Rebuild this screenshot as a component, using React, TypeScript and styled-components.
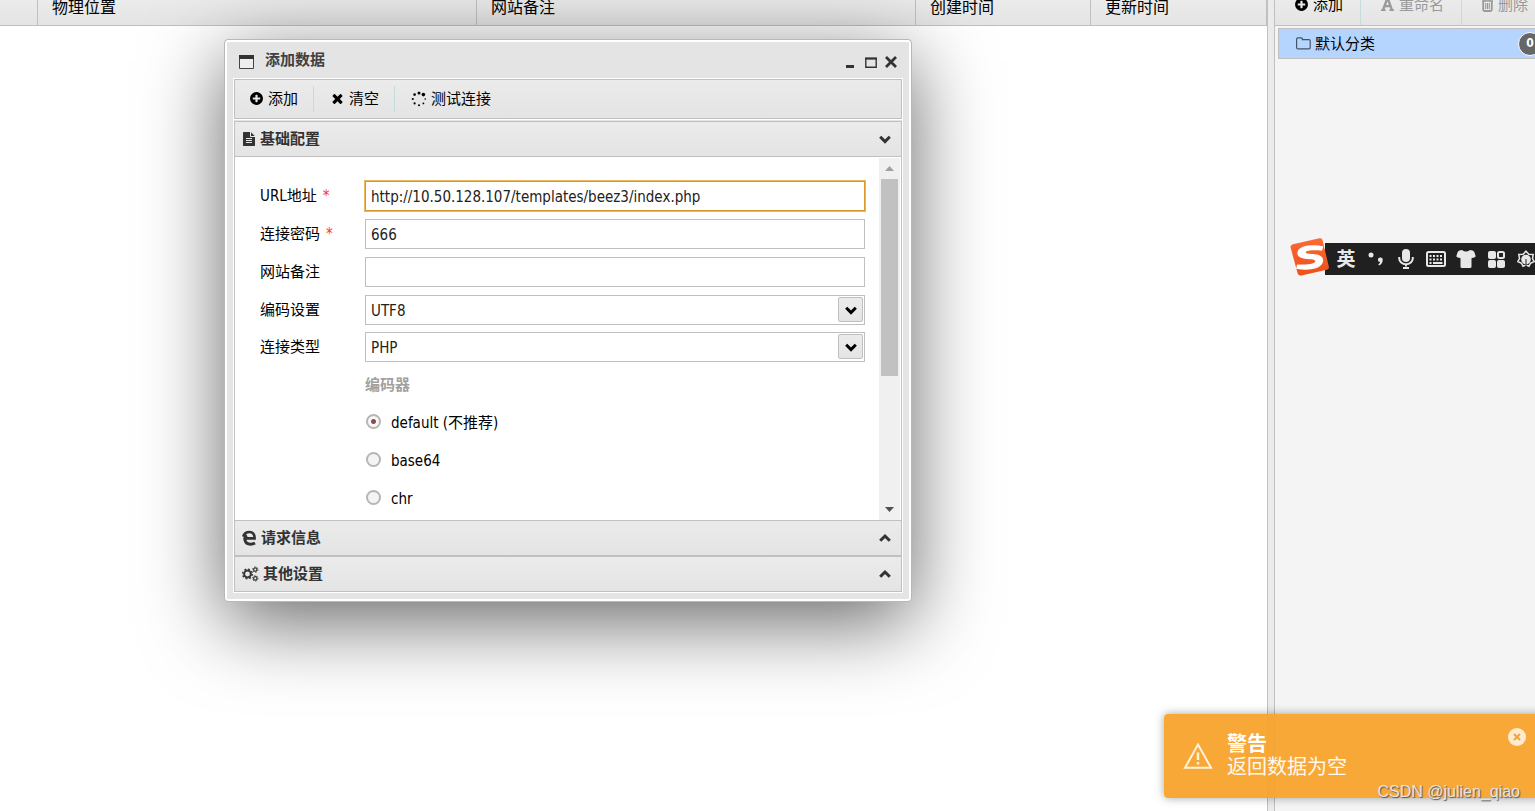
import React, { useState } from "react";
import styled, { createGlobalStyle, css } from "styled-components";
import { FaFont } from "react-icons/fa";

const edge = "#c0c0c0";
const bar = "linear-gradient(#ebebeb, #e4e4e4)";

const GlobalStyle = createGlobalStyle`
  * { box-sizing: border-box; }
  html, body, #root { height: 100%; margin: 0; }
  body {
    overflow: hidden;
    background: #fff;
    color: #000;
    font: 15px/20px Tahoma, "DejaVu Sans Condensed", "Noto Sans CJK SC", sans-serif;
  }
  button, input, select { font: inherit; color: inherit; margin: 0; }
  button { border: 0; padding: 0; background: none; white-space: nowrap; cursor: pointer; }
  svg { display: block; flex: none; }
`;

/* ---------- icons ---------- */

const Glyph = ({ d, size }: { d: string; size: number }) => (
  <svg width={size} height={size} viewBox="0 0 1792 1792" fill="currentColor" aria-hidden="true">
    <path d={d} />
  </svg>
);

const plusCircle =
  "M1344 960v-128q0-26-19-45t-45-19h-256v-256q0-26-19-45t-45-19h-128q-26 0-45 19t-19 45v256h-256q-26 0-45 19t-19 45v128q0 26 19 45t45 19h256v256q0 26 19 45t45 19h128q26 0 45-19t19-45v-256h256q26 0 45-19t19-45zm320-64q0 209-103 385.5t-279.5 279.5-385.5 103-385.5-103-279.5-279.5-103-385.5 103-385.5 279.5-279.5 385.5-103 385.5 103 279.5 279.5 103 385.5z";
const times =
  "M1490 1322q0 40-28 68l-136 136q-28 28-68 28t-68-28l-294-294-294 294q-28 28-68 28t-68-28l-136-136q-28-28-28-68t28-68l294-294-294-294q-28-28-28-68t28-68l136-136q28-28 68-28t68 28l294 294 294-294q28-28 68-28t68 28l136 136q28 28 28 68t-28 68l-294 294 294 294q28 28 28 68z";
const fileText =
  "M1596 476q14 14 28 36h-472v-472q22 14 36 28zm-476 164h544v1056q0 40-28 68t-68 28h-1344q-40 0-68-28t-28-68v-1600q0-40 28-68t68-28h800v544q0 40 28 68t68 28zm160 736v-64q0-14-9-23t-23-9h-704q-14 0-23 9t-9 23v64q0 14 9 23t23 9h704q14 0 23-9t9-23zm0-256v-64q0-14-9-23t-23-9h-704q-14 0-23 9t-9 23v64q0 14 9 23t23 9h704q14 0 23-9t9-23zm0-256v-64q0-14-9-23t-23-9h-704q-14 0-23 9t-9 23v64q0 14 9 23t23 9h704q14 0 23-9t9-23z";

const Chevron = ({ up }: { up?: boolean }) => (
  <svg width="14" height="14" viewBox="0 0 14 14" fill="none" stroke="currentColor" strokeWidth="3" aria-hidden="true">
    <path d={up ? "M2.2 9.8 7 5l4.8 4.8" : "M2.2 4.8 7 9.6l4.8-4.8"} />
  </svg>
);

const Spinner = () => (
  <svg width="16" height="16" viewBox="0 0 16 16" fill="currentColor" aria-hidden="true">
    <circle cx="8" cy="2" r="1.5" />
    <circle cx="12.4" cy="3.6" r="1.8" />
    <circle cx="14.2" cy="8" r="0.8" />
    <circle cx="12.4" cy="12.4" r="0.9" />
    <circle cx="8" cy="14.2" r="1" />
    <circle cx="3.6" cy="12.4" r="1.1" />
    <circle cx="1.8" cy="8" r="1.1" />
    <circle cx="3.6" cy="3.6" r="1.3" />
  </svg>
);

const BrowserIcon = () => (
  <svg width="15" height="16" viewBox="0 0 15 16" fill="none" stroke="currentColor" aria-hidden="true">
    <path d="M3.6 8.4H12.6C12.8 4.2 10.6 2 7.6 2 4.6 2 2 3.8 1.2 6.6" strokeWidth="2.6" />
    <path d="M4.8 5.2C1.6 7.2 2.2 14.2 8.4 14.2c2 0 3.4-.5 4.6-1.2" strokeWidth="3" />
  </svg>
);

const GearsIcon = () => (
  <svg width="17" height="16" viewBox="0 0 17 16" fill="none" stroke="currentColor" aria-hidden="true">
    <circle cx="5.5" cy="8" r="3.4" strokeWidth="2" />
    <circle cx="5.5" cy="8" r="4.9" strokeWidth="1.4" strokeDasharray="1.9 1.95" />
    <circle cx="13.3" cy="3.6" r="1.7" strokeWidth="1.2" />
    <circle cx="13.3" cy="3.6" r="2.7" strokeWidth="1" strokeDasharray="1.2 1.62" />
    <circle cx="13.3" cy="12.4" r="1.7" strokeWidth="1.2" />
    <circle cx="13.3" cy="12.4" r="2.7" strokeWidth="1" strokeDasharray="1.2 1.62" />
  </svg>
);

const TrashIcon = () => (
  <svg width="13" height="14" viewBox="0 0 13 14" fill="none" stroke="currentColor" aria-hidden="true">
    <path d="M1 3h11M4.200 3V1h4.600v2" strokeWidth="1.500" />
    <path d="M2.200 3v8.500q0 1.500 1.300 1.500h6q1.300 0 1.300-1.500V3" strokeWidth="1.800" />
    <path d="M4.700 5v6M6.500 5v6M8.300 5v6" strokeWidth="1.100" />
  </svg>
);

const WindowIcon = () => (
  <svg width="16" height="16" viewBox="0 0 16 16" aria-hidden="true">
    <path d="M.5 1.5h14v13H.5z" fill="#ededed" stroke="#444" />
    <path d="M0 1h15v4H0z" fill="#333" />
  </svg>
);

const FolderIcon = () => (
  <svg width="15" height="13" viewBox="0 0 15 13" fill="none" stroke="#456" aria-hidden="true">
    <path d="M.6 10.4V2.2Q.6.8 2 .8h3.2q1.2 0 1.2 1.4v.4H13q1.2 0 1.2 1.3v6.5q0 1.5-1.3 1.5H2q-1.4 0-1.4-1.5z" strokeWidth="1.2" />
  </svg>
);

const SogouLogo = () => (
  <svg width="40" height="40" viewBox="0 0 40 40" aria-hidden="true">
    <defs>
      <linearGradient id="sogou" x1="0" y1="0" x2="0" y2="1">
        <stop offset="0" stopColor="#fb6a35" />
        <stop offset="1" stopColor="#ee4f18" />
      </linearGradient>
    </defs>
    <path d="M3 7.2 29.5 1.3q2.4-.5 3 1.8l6.3 26.5q.5 2.6-2 3.2L11.4 38.5q-3 .6-3.7-2L.6 10.6Q0 7.9 3 7.2z" fill="url(#sogou)" />
    <path d="M33.5 9.3C27 7.6 12 7 8.200 13.3c-2.7 5.2 1.5 8 8 8.6 5 .5 9.6.4 9 2.5-.8 2.6-9.6 3.5-18.2 3.1l-.8 4.3c9.8 1.7 22.5 1.4 26.100-5.2 2.5-5-.7-8.700-7.4-9.300-4.7-.5-9.700-.3-9.200-2.200.6-2 9.500-2.300 16.200-1.400z" fill="#fff" />
  </svg>
);

const MicIcon = () => (
  <svg width="16" height="20" viewBox="0 0 16 20" fill="none" stroke="currentColor" strokeWidth="2" aria-hidden="true">
    <rect x="4" y="0" width="8" height="13" rx="4" fill="currentColor" stroke="none" />
    <path d="M1.200 8v1.200a6.800 6 0 0 0 13.600 0V8M8 15v2.500" />
    <path d="M5 19h6" />
  </svg>
);

const KeyboardIcon = () => (
  <svg width="20" height="16" viewBox="0 0 20 16" fill="none" stroke="currentColor" strokeWidth="2" aria-hidden="true">
    <rect x="1" y="1" width="18" height="14" rx="1.5" />
    <path d="M3.500 5h2m1.500 0h2m1.500 0h2m1.500 0h2M3.500 8.500h2m1.500 0h2m1.500 0h2m1.500 0h2M3.500 12h2m1.500 0h9.500" />
  </svg>
);

const ShirtIcon = () => (
  <svg width="20" height="18" viewBox="0 0 20 18" fill="currentColor" aria-hidden="true">
    <path d="M6 0q4 3.200 8 0l2.500.6Q18 1 18.500 2.500L19.600 6q.2 1-.8 1.300l-3.300.9v8.300q0 1.500-1.500 1.500H6q-1.500 0-1.500-1.500V8.200l-3.300-.9Q.2 7 .4 6l1.100-3.500Q2 1 3.500.6z" />
  </svg>
);

const GridIcon = () => (
  <svg width="17" height="17" viewBox="0 0 17 17" fill="currentColor" aria-hidden="true">
    <rect width="8" height="8" rx="2" />
    <rect x="10" y="1" width="6" height="6" rx="1.5" fill="none" stroke="currentColor" strokeWidth="2" />
    <rect y="9" width="8" height="8" rx="2" />
    <rect x="9" y="9" width="8" height="8" rx="2" />
  </svg>
);

const FlowerIcon = () => (
  <svg width="18" height="19" viewBox="0 0 18 19" fill="none" stroke="currentColor" aria-hidden="true">
    <path d="M9 1.200 11.800 4.300l4.400.2-.7 4 1.700 3-3.700 1.700-1.500 3-3-1.200-3 1.200-1.500-3L.8 11.500l1.700-3-.7-4 4.400-.2z" strokeWidth="1.500" />
    <circle cx="9" cy="9.500" r="4.800" fill="currentColor" stroke="none" />
    <path d="M9 9v9" stroke="#202020" />
  </svg>
);

const WarningIcon = () => (
  <svg width="30" height="28" viewBox="0 0 30 28" fill="none" stroke="#fff2da" strokeWidth="2" aria-hidden="true">
    <path d="M15 2.500 28 25.800H2z" />
    <path d="M15 10.500v7.500M15 20v2.500" strokeWidth="2.500" />
  </svg>
);

/* ---------- page ---------- */

const Page = styled.div`
  position: relative;
  display: grid;
  grid-template-columns: minmax(0, 1fr) 261px;
  column-gap: 6px;
  height: 100vh;
  overflow: hidden;
  background: #ebebeb;
`;

const Main = styled.main`
  background: #fff;
  border-right: 1px solid ${edge};
`;

const ListTable = styled.table`
  width: 100%;
  table-layout: fixed;
  border-collapse: separate;
  border-spacing: 0;
`;

const HeadCell = styled.th<{ $w?: number }>`
  width: ${(p) => (p.$w ? `${p.$w}px` : "auto")};
  height: 26px;
  padding: 0 0 10px 14px;
  vertical-align: bottom;
  text-align: left;
  font-weight: 400;
  font-size: 16px;
  line-height: 15px;
  background: ${bar};
  border-right: 1px solid ${edge};
  border-bottom: 1px solid ${edge};
`;

const Side = styled.aside`
  min-width: 0;
  overflow: hidden;
  background: #f4f4f4;
  border-left: 1px solid ${edge};
`;

const SideBar = styled.div`
  display: flex;
  align-items: flex-end;
  height: 26px;
  background: ${bar};
  border-bottom: 1px solid ${edge};
`;

const SideTool = styled.button`
  display: flex;
  align-items: center;
  gap: 4px;
  height: 26px;
  padding: 0 17px 15px 19px;
  border-right: 1px solid #c5dcdc;
  line-height: 20px;
  &:disabled { color: #999; }
`;

const Category = styled.div`
  display: flex;
  align-items: center;
  gap: 4px;
  height: 31px;
  margin: 2px -25px 0 3px;
  padding: 0 17px;
  background: #b5d5ff;
  border: 1px solid ${edge};
`;

const Badge = styled.span`
  margin-left: auto;
  width: 24px;
  height: 24px;
  border: 1px solid #fff;
  border-radius: 12px;
  background: #666;
  color: #fff;
  font-size: 12px;
  font-weight: 700;
  line-height: 21px;
  text-align: center;
`;

/* ---------- dialog window ---------- */

const Dialog = styled.section`
  position: absolute;
  left: 224px;
  top: 39px;
  width: 688px;
  padding: 0 6px 8px;
  border: 1px solid #b8b8b8;
  border-radius: 4px;
  background: #e4e4e4;
  box-shadow: inset 0 0 0 2px #fff, 0 20px 80px rgba(0, 0, 0, 0.6);
`;

const TitleBar = styled.header`
  display: flex;
  align-items: center;
  gap: 10px;
  height: 36px;
  padding: 4px 10px 0 8px;
  margin-top: 2px;
  color: #404040;
  font-weight: 700;
`;

const Title = styled.h1`
  flex: 1;
  margin: 0 0 4px;
  font-size: 15px;
  line-height: 20px;
`;

const WindowButton = styled.button`
  display: grid;
  place-items: center;
  width: 10px;
  height: 14px;
  color: #333;
`;

const Frame = styled.div`
  border: 1px solid #fff;
  margin: 0 2px;
`;

const Toolbar = styled.div`
  display: flex;
  align-items: center;
  height: 40px;
  margin-bottom: 2px;
  border: 1px solid ${edge};
  background: ${bar};
  outline: 1px solid #fff;
`;

const Tool = styled.button`
  display: flex;
  align-items: center;
  gap: 4px;
  height: 26px;
  padding: 0 15px 1px 14px;
  & + & { padding-left: 16px; border-left: 1px solid #c5dcdc; }
`;

const SectionHead = styled.button`
  display: flex;
  align-items: center;
  gap: 4px;
  width: 100%;
  height: 36px;
  padding: 0 9px 0 7px;
  border: 1px solid ${edge};
  background: ${bar};
  color: #333;
  font-weight: 700;
`;

const HeadText = styled.span`
  flex: 1;
  text-align: left;
`;

const Pane = styled.div`
  display: flex;
  height: 363px;
  overflow: hidden;
  padding: 1px 1px 0 0;
  border: solid ${edge};
  border-width: 0 1px;
  background: #fff;
`;

const Form = styled.form`
  flex: 1;
  min-width: 0;
  padding: 23px 14px 0 25px;
`;

const Group = styled.div<{ $gap: number }>`
  display: flex;
  flex-direction: column;
  gap: ${(p) => p.$gap}px;
  margin-bottom: 8px;
`;

const Row = styled.div`
  display: flex;
  align-items: center;
  height: 30px;
`;

const Label = styled.label`
  width: 105px;
  padding-bottom: 1px;
`;

const Required = styled.span`
  margin-left: 6px;
  color: #f33;
`;

const fieldBox = css`
  flex: 1;
  min-width: 0;
  width: 100%;
  height: 30px;
  padding: 2px 5px 0;
  border: 1px solid ${edge};
  border-radius: 0;
  background: #fff;
  color: #222;
  outline: 0;
`;

const Input = styled.input<{ $active?: boolean }>`
  ${fieldBox}
  ${(p) => p.$active && css`
    border-color: #d99a2b;
    box-shadow: 0 0 0 1px #eab75a;
  `}
`;

const SelectWrap = styled.div`
  position: relative;
  flex: 1;
`;

const Select = styled.select`
  ${fieldBox}
  display: block;
  appearance: none;
`;

const SelectArrow = styled.span`
  position: absolute;
  top: 2px;
  right: 2px;
  display: grid;
  place-items: center;
  width: 25px;
  height: 25px;
  border: 1px solid ${edge};
  border-radius: 2px;
  background: ${bar};
  color: #000;
  pointer-events: none;
`;

const Encoders = styled.fieldset`
  margin: 0 0 0 105px;
  padding: 0;
  border: 0;
`;

const Legend = styled.legend`
  height: 30px;
  padding: 0;
  color: #a0a0a0;
  font-weight: 700;
  line-height: 30px;
`;

const Choice = styled.label`
  display: flex;
  align-items: center;
  gap: 10px;
  height: 30px;
  margin-top: 8px;
  padding-left: 1px;
`;

const Radio = styled.input`
  appearance: none;
  width: 15px;
  height: 15px;
  margin-bottom: 3px;
  border: 2px solid #b9b4b7;
  border-radius: 50%;
  background: #f4f4f4;
  &:checked {
    background: radial-gradient(circle, #8f4a4a 2px, #f8f8f8 3px);
  }
`;

const ScrollTrack = styled.div`
  display: flex;
  flex-direction: column;
  justify-content: space-between;
  width: 21px;
  padding: 0 2px;
  background: #f0f0f0;
`;

const ScrollThumb = styled.div`
  flex: none;
  height: 197px;
  margin-bottom: auto;
  background: #c1c1c1;
`;

const ScrollArrow = styled.button<{ $down?: boolean }>`
  display: grid;
  place-items: center;
  height: 21px;
  color: ${(p) => (p.$down ? "#505050" : "#a0a0a0")};
`;

/* ---------- overlays ---------- */

const ImeBar = styled.div`
  position: absolute;
  right: 0;
  top: 243px;
  display: flex;
  align-items: center;
  width: 210px;
  height: 32px;
  background: #202020;
  color: #e8e8e8;
  white-space: nowrap;
`;

const ImeLogo = styled.span`
  margin-left: -35px;
  margin-right: 1px;
  margin-top: -4px;
`;

const ImeItem = styled.button`
  flex: none;
  display: grid;
  place-items: center;
  width: 30px;
  height: 32px;
  font-size: 19px;
  font-weight: 700;
`;

const Toast = styled.div`
  position: absolute;
  right: -10px;
  bottom: 13px;
  display: flex;
  align-items: center;
  gap: 14px;
  width: 381px;
  height: 84px;
  padding: 0 19px;
  border-radius: 4px;
  background: rgba(248, 161, 40, 0.93);
  box-shadow: 0 0 10px rgba(0, 0, 0, 0.35);
  color: #fff8ec;
  font: 20px/23px "Liberation Serif", "Noto Sans CJK SC", serif;
`;

const ToastText = styled.p`
  flex: 1;
  margin: 0;
  strong { display: block; color: #fff; }
`;

const ToastClose = styled.button`
  align-self: flex-start;
  display: grid;
  place-items: center;
  width: 18px;
  height: 18px;
  margin-top: 14px;
  border-radius: 50%;
  background: #fdebd0;
  color: #f0a43c;
`;

const Watermark = styled.span`
  position: absolute;
  right: 15px;
  bottom: 9px;
  color: #e4e4e4;
  font: 16px/20px "Liberation Sans", sans-serif;
  text-shadow: 1px 1px 1px #555;
`;

export default function App() {
  const [encoder, setEncoder] = useState("default");
  return (
    <>
      <GlobalStyle />
      <Page>
        <Main>
          <ListTable>
            <thead>
              <tr>
                <HeadCell $w={38} />
                <HeadCell>物理位置</HeadCell>
                <HeadCell>网站备注</HeadCell>
                <HeadCell $w={175}>创建时间</HeadCell>
                <HeadCell $w={176}>更新时间</HeadCell>
              </tr>
            </thead>
          </ListTable>
        </Main>

        <Side>
          <SideBar>
            <SideTool><Glyph d={plusCircle} size={15} />添加</SideTool>
            <SideTool disabled><FaFont size={15} />重命名</SideTool>
            <SideTool disabled><TrashIcon />删除</SideTool>
          </SideBar>
          <Category>
            <FolderIcon />
            默认分类
            <Badge>0</Badge>
          </Category>
        </Side>

        <Dialog role="dialog" aria-labelledby="dialog-title">
          <TitleBar>
            <WindowIcon />
            <Title id="dialog-title">添加数据</Title>
            <WindowButton aria-label="最小化">
              <svg width="10" height="12" viewBox="0 0 10 12"><path d="M1 9h8v3H1z" fill="#333" /></svg>
            </WindowButton>
            <WindowButton aria-label="最大化">
              <svg width="12" height="11" viewBox="0 0 12 11"><path d="M.8 1.500h10.400v8.700H.8z" fill="none" stroke="#333" strokeWidth="1.400" /><path d="M0 .5h12v2H0z" fill="#333" /></svg>
            </WindowButton>
            <WindowButton aria-label="关闭">
              <svg width="12" height="12" viewBox="0 0 12 12" stroke="#333" strokeWidth="2.800"><path d="m1 1 10 10M11 1 1 11" /></svg>
            </WindowButton>
          </TitleBar>
          <Frame>
            <Toolbar>
              <Tool><Glyph d={plusCircle} size={15} />添加</Tool>
              <Tool><Glyph d={times} size={15} />清空</Tool>
              <Tool><Spinner />测试连接</Tool>
            </Toolbar>

            <SectionHead aria-expanded="true">
              <Glyph d={fileText} size={14} />
              <HeadText>基础配置</HeadText>
              <Chevron />
            </SectionHead>
            <Pane>
              <Form>
                <Group $gap={8}>
                  <Row>
                    <Label htmlFor="url">URL地址<Required>*</Required></Label>
                    <Input id="url" $active defaultValue="http://10.50.128.107/templates/beez3/index.php" />
                  </Row>
                  <Row>
                    <Label htmlFor="pwd">连接密码<Required>*</Required></Label>
                    <Input id="pwd" defaultValue="666" />
                  </Row>
                  <Row>
                    <Label htmlFor="note">网站备注</Label>
                    <Input id="note" />
                  </Row>
                </Group>
                <Group $gap={7}>
                  <Row>
                    <Label htmlFor="encode">编码设置</Label>
                    <SelectWrap>
                      <Select id="encode"><option>UTF8</option></Select>
                      <SelectArrow><Chevron /></SelectArrow>
                    </SelectWrap>
                  </Row>
                  <Row>
                    <Label htmlFor="type">连接类型</Label>
                    <SelectWrap>
                      <Select id="type"><option>PHP</option></Select>
                      <SelectArrow><Chevron /></SelectArrow>
                    </SelectWrap>
                  </Row>
                </Group>
                <Encoders>
                  <Legend>编码器</Legend>
                  {[["default", "default (不推荐)"], ["base64", "base64"], ["chr", "chr"]].map(([value, text]) => (
                    <Choice key={value}>
                      <Radio type="radio" name="encoder" checked={encoder === value} onChange={() => setEncoder(value)} />
                      {text}
                    </Choice>
                  ))}
                </Encoders>
              </Form>
              <ScrollTrack>
                <ScrollArrow aria-label="向上滚动">
                  <svg width="9" height="5" viewBox="0 0 9 5" fill="currentColor"><path d="M4.500 0 9 5H0z" /></svg>
                </ScrollArrow>
                <ScrollThumb />
                <ScrollArrow $down aria-label="向下滚动">
                  <svg width="9" height="5" viewBox="0 0 9 5" fill="currentColor"><path d="M0 0h9L4.500 5z" /></svg>
                </ScrollArrow>
              </ScrollTrack>
            </Pane>
            <SectionHead aria-expanded="false">
              <BrowserIcon />
              <HeadText>请求信息</HeadText>
              <Chevron up />
            </SectionHead>
            <SectionHead aria-expanded="false">
              <GearsIcon />
              <HeadText>其他设置</HeadText>
              <Chevron up />
            </SectionHead>
          </Frame>
        </Dialog>

        <ImeBar>
          <ImeLogo><SogouLogo /></ImeLogo>
          <ImeItem aria-label="中英文切换">英</ImeItem>
          <ImeItem aria-label="标点">
            <svg width="16" height="16" viewBox="0 0 16 16" fill="currentColor"><circle cx="3" cy="4" r="2.500" /><path d="M12.200 6.500a2.400 2.400 0 0 1 2.500 2.600q0 3.800-3.600 5.400l-.8-1.200q1.600-.9 1.800-2.300a2.200 2.200 0 0 1 .1-4.500z" /></svg>
          </ImeItem>
          <ImeItem aria-label="语音"><MicIcon /></ImeItem>
          <ImeItem aria-label="键盘"><KeyboardIcon /></ImeItem>
          <ImeItem aria-label="皮肤"><ShirtIcon /></ImeItem>
          <ImeItem aria-label="工具箱"><GridIcon /></ImeItem>
          <ImeItem aria-label="设置"><FlowerIcon /></ImeItem>
        </ImeBar>

        <Toast role="alert">
          <WarningIcon />
          <ToastText><strong>警告</strong>返回数据为空</ToastText>
          <ToastClose aria-label="关闭">
            <svg width="8" height="8" viewBox="0 0 8 8" stroke="currentColor" strokeWidth="2"><path d="m1 1 6 6M7 1 1 7" /></svg>
          </ToastClose>
        </Toast>
        <Watermark>CSDN @julien_qiao</Watermark>
      </Page>
    </>
  );
}
